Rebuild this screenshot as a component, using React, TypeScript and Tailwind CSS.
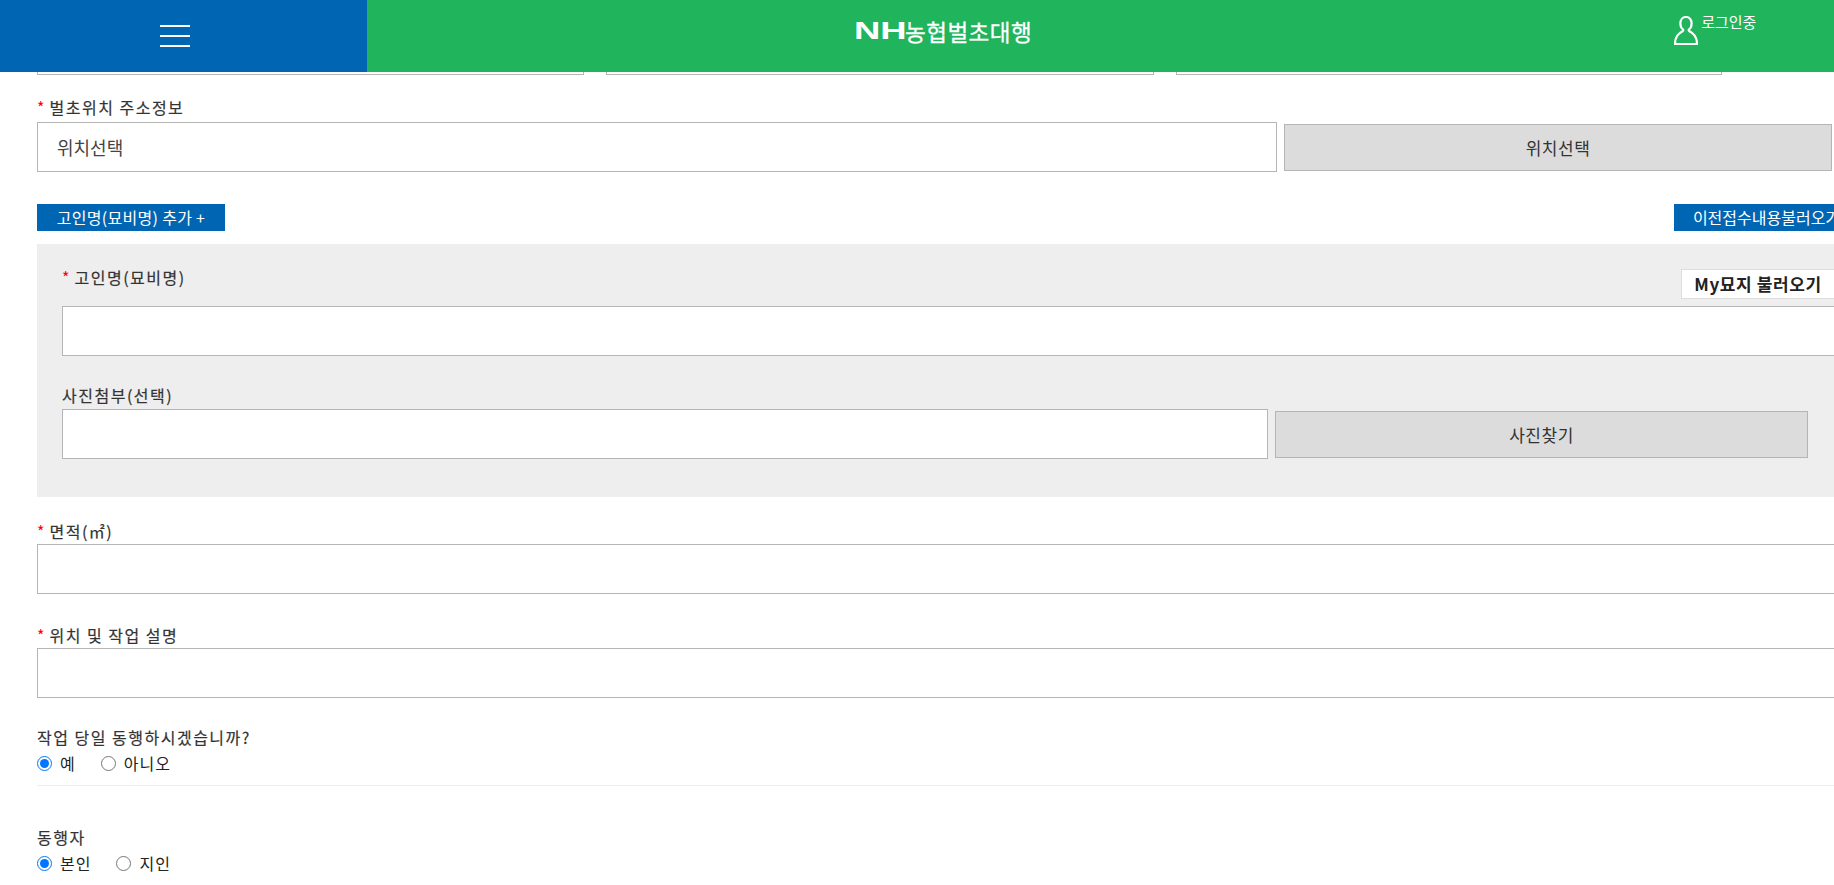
import React from 'react';

const FONT = 'font-["Malgun_Gothic","Noto_Sans_CJK_KR","Liberation_Sans",sans-serif]';
const INPUT = 'block h-[50px] border border-[#b5b5b5] bg-white outline-none';
const GREY_BTN = 'h-[47px] mt-[2px] border border-[#b5b5b5] bg-[#dcdcdc] text-[17px] tracking-[0.5px] text-[#333]';
const LABEL = 'h-6 leading-[22px] text-[16px] tracking-[1.5px] text-[#333] [-webkit-text-stroke:0.2px_#333]';

function Required() {
  return <span className="text-[#ff0000] mr-[5px] tracking-normal [-webkit-text-stroke:0]">*</span>;
}

function Radio({ name, label, checked, className }: { name: string; label: string; checked?: boolean; className?: string }) {
  return (
    <label className={`flex items-center ${className ?? ''}`}>
      <input type="radio" name={name} defaultChecked={checked} className="m-0 w-[15px] h-[15px]" />
      <span className="ml-[8px] text-[16px] tracking-[1px] text-[#222]">{label}</span>
    </label>
  );
}

export default function App() {
  return (
    <div className={`${FONT} h-screen overflow-hidden bg-white`}>
      <header className="relative z-10 flex h-[72px] bg-[#20b45c]">
        <div className="flex w-[367px] items-center justify-center bg-[#0066b3]">
          <div className="flex w-[30px] flex-col gap-[8px] ml-[-18px]">
            <span className="h-[2px] bg-white" />
            <span className="h-[2px] bg-white" />
            <span className="h-[2px] bg-white" />
          </div>
        </div>
        <div className="flex w-[487px] shrink-0" />
        <div className="flex h-full items-center pb-[10px] text-white">
          <span className="inline-block w-[51px] origin-left scale-x-[1.52] font-['Liberation_Sans'] text-[24px] font-bold leading-none">NH</span>
          <span className="text-[22.5px] tracking-[0.5px] leading-none [-webkit-text-stroke:0.3px_white]">농협벌초대행</span>
        </div>
        <div className="ml-[642px] flex items-start pt-[16px] text-white">
          <svg width="24" height="29" viewBox="0 0 24 29" fill="none" stroke="white" strokeWidth="2.2">
            <path d="M12 1c-3.6 0-5.6 2.9-5.600 6.400 0 2.600 1 4.800 2.600 6 .5.400.4 1.200-.1 1.600C5 17.200 1 20 1 28h22c0-8-4-10.800-7.900-13-.5-.4-.6-1.200-.1-1.600 1.600-1.200 2.600-3.400 2.600-6C17.600 3.900 15.600 1 12 1z" />
          </svg>
          <span className="ml-[3px] mt-[-3px] text-[15px] leading-[18px]">로그인중</span>
        </div>
      </header>

      <main className="ml-[37px] w-[1822px]">
        <div className="mt-[-47px] flex">
          <input className={`${INPUT} w-[547px]`} />
          <input className={`${INPUT} ml-[22px] w-[548px]`} />
          <input className={`${INPUT} ml-[22px] w-[546px]`} />
        </div>

        <div className={`mt-[21px] mb-[2px] ${LABEL}`}><Required />벌초위치 주소정보</div>
        <div className="flex items-start">
          <input readOnly value="위치선택" className={`${INPUT} w-[1240px] pl-[19px] text-[18px] text-[#444]`} />
          <button className={`${GREY_BTN} ml-[7px] w-[548px]`}>위치선택</button>
        </div>

        <div className="mt-[32px] flex justify-between">
          <button className="h-[27px] w-[188px] bg-[#0066b3] pb-[1px] text-[16px] tracking-[0.3px] text-white">고인명(묘비명) 추가 +</button>
          <button className="h-[27px] w-[185px] bg-[#0066b3] pb-[1px] text-[16px] text-white">이전접수내용불러오기</button>
        </div>

        <section className="mt-[13px] h-[253px] bg-[#eeeeee] pl-[25px] pr-[24px] pt-[22px]">
          <div className="flex h-[40px] items-start justify-between">
            <div className={LABEL}><Required />고인명(묘비명)</div>
            <button className="mt-[3px] h-[30px] w-[154px] border border-[#dddddd] bg-white text-[17px] tracking-[0.6px] font-semibold text-[#222]">My묘지 불러오기</button>
          </div>
          <input className={`${INPUT} w-full`} />

          <div className={`mt-[28px] mb-[1px] ${LABEL}`}>사진첨부(선택)</div>
          <div className="flex items-start">
            <input className={`${INPUT} w-[1206px]`} />
            <button className={`${GREY_BTN} ml-[7px] w-[533px]`}>사진찾기</button>
          </div>
        </section>

        <div className={`mt-[23px] ${LABEL}`}><Required />면적(㎡)</div>
        <input className={`${INPUT} w-full`} />

        <div className={`mt-[30px] ${LABEL}`}><Required />위치 및 작업 설명</div>
        <input className={`${INPUT} w-full`} />

        <div className={`mt-[28px] ${LABEL}`}>작업 당일 동행하시겠습니까?</div>
        <div className="mt-[1px] flex h-6 items-center">
          <Radio name="together" label="예" checked />
          <Radio name="together" label="아니오" className="ml-[25px]" />
        </div>
        <div className="mt-[10px] border-t border-[#eeeeee]" />

        <div className={`mt-[40px] ${LABEL}`}>동행자</div>
        <div className="mt-[1px] flex h-6 items-center">
          <Radio name="companion" label="본인" checked />
          <Radio name="companion" label="지인" className="ml-[25px]" />
        </div>
      </main>
    </div>
  );
}
